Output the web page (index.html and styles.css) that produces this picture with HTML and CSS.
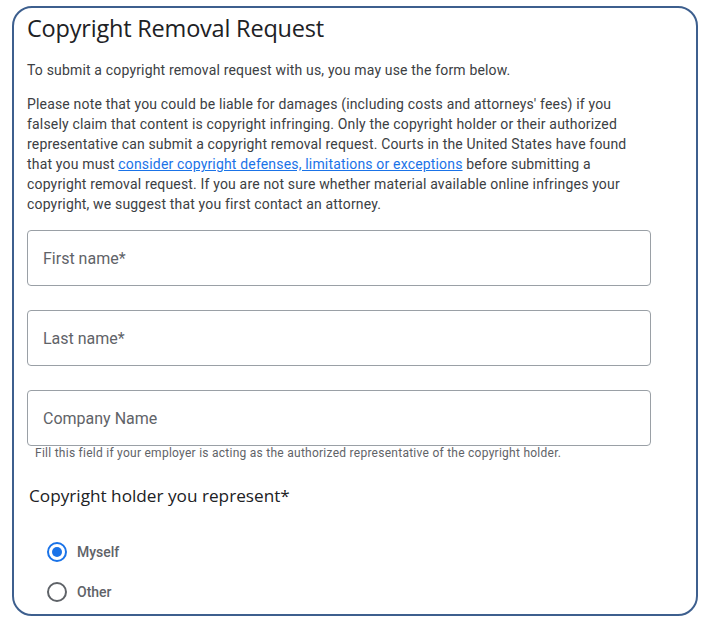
FILE: index.html
```html
<!DOCTYPE html>
<html lang="en">
<head>
    <meta charset="UTF-8">
    <meta name="viewport" content="width=device-width, initial-scale=1.0">
    <title>Copyright Removal Request</title>
    <link rel="stylesheet" href="styles.css">
</head>
<body>
    <div class="frame">
        <h1>Copyright Removal Request</h1>

        <p class="intro">To submit a copyright removal request with us, you may use the form below.</p>

        <p class="note">Please note that you could be liable for damages (including costs and attorneys' fees) if you
            falsely claim that content is copyright infringing. Only the copyright holder or their authorized
            representative can submit a copyright removal request. Courts in the United States have found
            that you must <a href="#">consider copyright defenses, limitations or exceptions</a> before submitting a
            copyright removal request. If you are not sure whether material available online infringes your
            copyright, we suggest that you first contact an attorney.</p>

        <div class="fields">
            <input type="text" class="field" placeholder="First name*">
            <input type="text" class="field" placeholder="Last name*">
            <div class="field-group">
                <input type="text" class="field" placeholder="Company Name">
                <div class="hint">Fill this field if your employer is acting as the authorized representative of the copyright holder.</div>
            </div>
        </div>

        <h2>Copyright holder you represent*</h2>

        <div class="options">
            <label class="option">
                <input type="radio" name="holder" checked>
                <span class="dot"></span>
                Myself
            </label>
            <label class="option">
                <input type="radio" name="holder">
                <span class="dot"></span>
                Other
            </label>
        </div>
    </div>
</body>
</html>
```

FILE: styles.css
```css
body {
    margin: 0;
    padding: 6px 8px 0 12px;
    background-color: #fff;
    font-family: Roboto, Arial, sans-serif;
    color: #3c4043;
}
.frame {
    box-sizing: border-box;
    width: 686px;
    height: 610px;
    border: 2px solid #3d5f8e;
    border-radius: 20px;
    padding: 0 45px 0 13px;
    overflow: hidden;
}
h1 {
    margin: 5px 0 0 0;
    font-family: "Open Sans", sans-serif;
    font-weight: 400;
    font-size: 23.5px;
    line-height: 30px;
    color: #202124;
    letter-spacing: -0.2px;
}
.intro {
    margin: 17px 0 0 0;
    font-size: 14px;
    line-height: 20px;
    letter-spacing: 0.17px;
}
.note {
    margin: 14px 0 0 0;
    max-width: 600px;
    font-size: 14px;
    line-height: 20px;
    letter-spacing: 0.17px;
}
.note a {
    color: #1a73e8;
    text-decoration: underline;
}
.fields {
    margin-top: 16px;
    display: flex;
    flex-direction: column;
    gap: 24px;
}
.field {
    box-sizing: border-box;
    width: 624px;
    height: 56px;
    margin: 0;
    padding: 0 15px;
    border: 1px solid #9aa0a6;
    border-radius: 4px;
    font-family: Roboto, Arial, sans-serif;
    font-size: 16px;
    color: #202124;
    background-color: #fff;
    display: block;
}
.field::placeholder {
    color: #5f6368;
}
.hint {
    margin: 0 0 0 8px;
    font-size: 12px;
    line-height: 14px;
    letter-spacing: 0.26px;
    color: #5f6368;
}
h2 {
    margin: 24px 0 0 2px;
    font-family: "Open Sans", sans-serif;
    font-weight: 400;
    font-size: 17.2px;
    line-height: 24px;
    color: #202124;
}
.options {
    margin-top: 33px;
    display: flex;
    flex-direction: column;
    gap: 18px;
}
.option {
    display: flex;
    align-items: center;
    gap: 10px;
    padding-left: 20px;
    font-size: 14px;
    font-weight: 500;
    line-height: 22px;
    color: #5f6368;
    cursor: pointer;
}
.option input {
    display: none;
}
.dot {
    box-sizing: border-box;
    width: 20px;
    height: 20px;
    border: 2px solid #5f6368;
    border-radius: 50%;
    position: relative;
}
.option input:checked + .dot {
    border-color: #1a73e8;
}
.option input:checked + .dot::after {
    content: "";
    position: absolute;
    left: 3px;
    top: 3px;
    width: 10px;
    height: 10px;
    border-radius: 50%;
    background-color: #1a73e8;
}
```
